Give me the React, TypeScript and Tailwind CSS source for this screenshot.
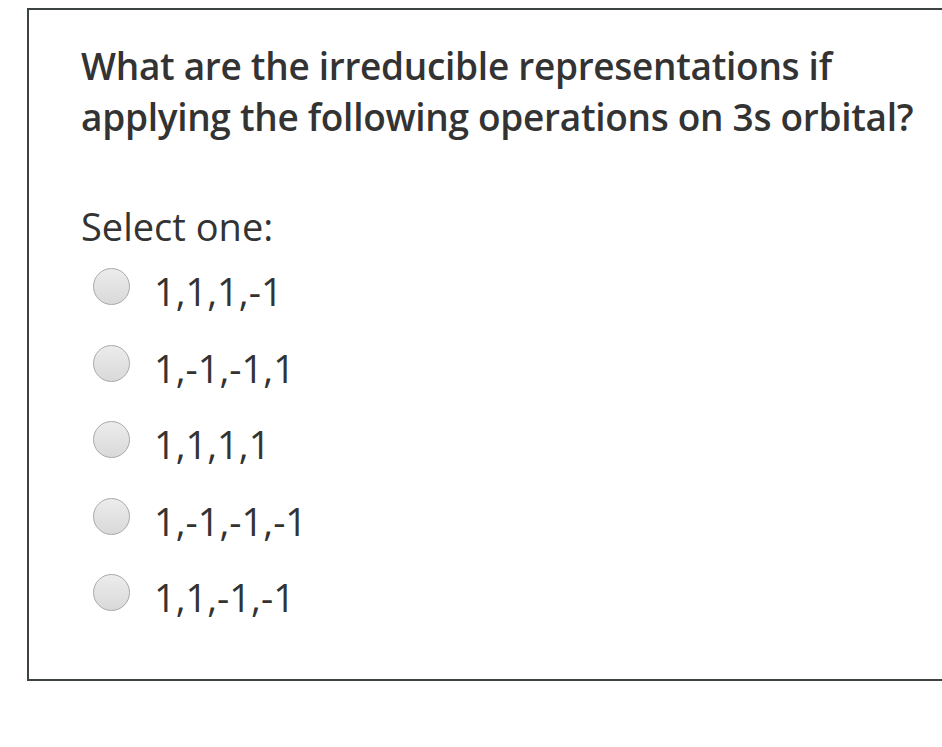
export default function App() {
  const options = ['1,1,1,-1', '1,-1,-1,1', '1,1,1,1', '1,-1,-1,-1', '1,1,-1,-1'];

  return (
    <div className="min-h-[747px] w-[942px] overflow-hidden bg-white pt-[8px] pl-[27px] font-['Open_Sans',sans-serif] text-[#333]">
      <div className="h-[673px] w-[940px] border-2 border-r-0 border-[#3d4343] pl-[52px] pt-[30px]">
        <h2 className="text-[37px] font-semibold leading-[51px] tracking-[-0.3px] text-[#333]">
          What are the irreducible representations if
          <br />
          applying the following operations on 3s orbital?
        </h2>
        <p className="mt-[59px] text-[38px] leading-[50px]">Select one:</p>
        <div className="mt-[6px] flex flex-col">
          {options.map((opt) => (
            <label key={opt} className="flex h-[76.5px] items-start">
              <span className="ml-[12px] mt-[11px] h-[37px] w-[37px] rounded-full border border-[#a9a9a9] bg-gradient-to-b from-[#ececec] to-[#d9d9d9]" />
              <span className="ml-[24px] mt-[4px] text-[38px] leading-[60px]">{opt}</span>
            </label>
          ))}
        </div>
      </div>
    </div>
  );
}
